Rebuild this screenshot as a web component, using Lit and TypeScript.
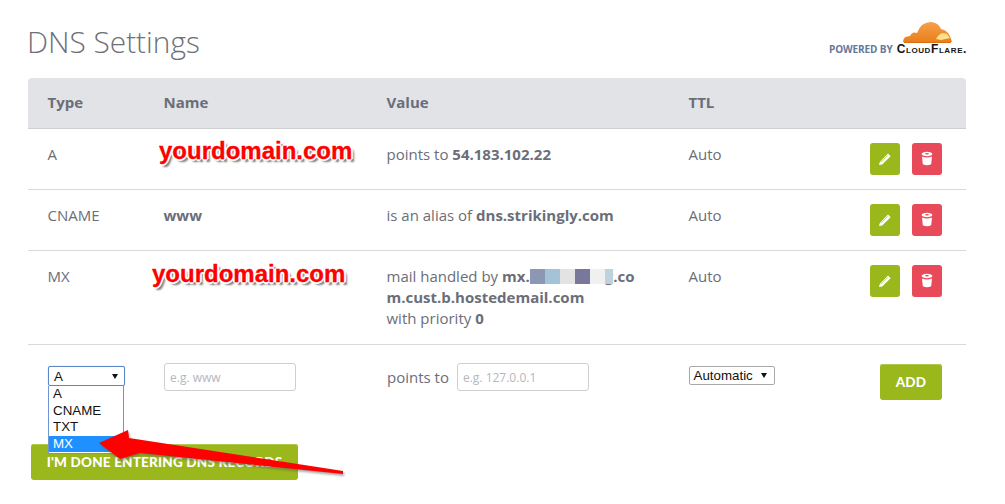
import { LitElement, html, css, svg } from "lit";
import { customElement } from "lit/decorators.js";

const pencil = svg`<svg class="ico" width="14" height="14" viewBox="0 0 14 14"><path d="M1.8 10 L10 1.6 L12.6 4.2 L4.2 12.4 L1 13 Z" fill="#fff"/><path d="M3 10.2 L10 3.2" stroke="#9ab71c" stroke-width=".6"/></svg>`;
const trash = svg`<svg class="ico" width="14" height="16" viewBox="0 0 14 16"><ellipse cx="7" cy="3" rx="5.4" ry="2.2" fill="#fff"/><ellipse cx="7" cy="2.8" rx="2" ry=".7" fill="#e84a5a"/><path d="M2 5.6 Q7 7.6 12 5.6 L11.2 13.2 Q7 15.4 2.8 13.2 Z" fill="#fff"/></svg>`;

@customElement("app-root")
export class AppRoot extends LitElement {
  static styles = css`
    :host { display: block; width: 1005px; height: 504px; position: relative; overflow: hidden; background: #fff; font-family: "Open Sans", sans-serif; color: #6b6e78; font-size: 15px; }
    .page { padding: 0 39px 0 28px; }
    .top { height: 78px; display: flex; justify-content: space-between; }
    h1 { margin: 21px 0 0 -1px; font-size: 29.8px; line-height: 42px; font-weight: 300; color: #6d7078; }
    .brand { display: flex; flex-direction: column; align-items: flex-end; padding-top: 21px; margin-right: -1px; }
    .cloud { display: block; margin-right: 15px; }
    .brandline { display: flex; align-items: baseline; margin-top: 0; line-height: 10px; white-space: nowrap; }
    .pow { font-size: 10px; font-weight: 700; color: #66779a; letter-spacing: -.1px; margin-right: 4px; }
    .cf { font-family: "Liberation Sans", sans-serif; font-size: 12px; font-weight: 700; color: #151515; font-variant: small-caps; letter-spacing: .6px; }
    .row { display: grid; grid-template-columns: 116px 223px 302px 1fr; padding-left: 19.5px; border-bottom: 1px solid #d9d9d9; position: relative; }
    .head { height: 50px; box-sizing: content-box; background: #e1e3e7; border-radius: 4px 4px 0 0; align-items: center; font-weight: 700; border-bottom: 1px solid #cfcfd2; color: #6b6e78; }
    .head div { margin-top: -2px; }
    .r1 { height: 60px; }
    .r3 { height: 93px; }
    .cell { padding-top: 15px; line-height: 21px; }
    b { font-weight: 700; }
    .pix { display: inline-flex; vertical-align: top; margin: 3px -8px 0 0; height: 15px; position: relative; z-index: 1; }
    .pix i { width: 15px; height: 15px; display: block; }
    .pix i:last-child { width: 8px; }
    .acts { position: absolute; right: 24px; top: 14px; display: flex; gap: 12px; }
    .btn { width: 30px; height: 32px; border-radius: 3px; display: flex; align-items: center; justify-content: center; }
    .green { background: #9ab71c; }
    .red { background: #e84a5a; }
    .form { display: grid; grid-template-columns: 116px 223px 302px 1fr; padding: 18px 0 0 20px; height: 99px; box-sizing: border-box; position: relative; }
    .fake { box-sizing: border-box; font-family: "Liberation Sans", sans-serif; font-size: 13.33px; color: #111; background: #fff; display: flex; align-items: center; justify-content: space-between; }
    .sel { width: 77px; height: 20px; margin-top: 3px; border: 1px solid #5b86c8; box-shadow: 0 0 1px #7fa6e0; border-radius: 2px; padding: 0 6px 0 5px; }
    .ttl { width: 86px; height: 19px; margin-top: 3px; border: 1px solid #a9a9a9; border-radius: 2px; padding: 0 7px 0 4px; margin-left: -0.5px; }
    .tri { width: 0; height: 0; border-left: 3.5px solid transparent; border-right: 3.5px solid transparent; border-top: 5px solid #111; }
    .inp { box-sizing: border-box; width: 132px; height: 28px; border: 1px solid #cfcfcf; border-radius: 3px; padding: 0 5px; display: flex; align-items: center; font-size: 12px; color: #b4b7bd; }
    .pts { display: flex; align-items: center; gap: 8px; height: 28px; }
    .add { position: absolute; right: 24px; top: 19px; width: 62px; height: 36px; border-radius: 3px; background: #9ab71c; box-shadow: inset 0 1px #b2c950; color: #fff; font-family: Lato, sans-serif; font-weight: 900; font-size: 13.5px; display: flex; align-items: center; justify-content: center; letter-spacing: .2px; }
    .done { margin: 0 0 0 3px; width: 267px; height: 36px; border-radius: 3px; background: #9ab71c; box-shadow: inset 0 1px #b2c950; color: #fff; font-family: Lato, sans-serif; font-weight: 900; font-size: 13.5px; display: flex; align-items: center; justify-content: center; letter-spacing: .2px; }
    .menu { position: absolute; left: 48px; top: 386px; width: 76px; height: 68px; box-sizing: border-box; border: 1px solid #6f94d2; border-top: none; background: #fff; font-family: "Liberation Sans", sans-serif; font-size: 13.33px; line-height: 16.5px; color: #111; }
    .menu div { padding-left: 4px; height: 16.5px; }
    .menu .on { background: #1e90ff; color: #fff; }
    .mark { position: absolute; font-family: "Liberation Sans", sans-serif; font-weight: 700; font-size: 24px; line-height: 28px; color: #ff0000; -webkit-text-stroke: 0.3px #f00; text-shadow: 1px 1px 0 #fff, -1px -1px 0 #fff, 1px -1px 0 #fff, -1px 1px 0 #fff, 2px 0 0 #fff, -2px 0 0 #fff, 0 2px 0 #fff, 0 -2px 0 #fff, 3px 3px 2px #777; white-space: nowrap; }
    .m1 { left: 159px; top: 137px; }
    .m2 { left: 152px; top: 260px; }
    .arrow { position: absolute; left: 0; top: 0; filter: drop-shadow(1px 2px 1px rgba(90,90,90,.55)); }
  `;

  private actions() {
    return html`<div class="acts"><div class="btn green">${pencil}</div><div class="btn red">${trash}</div></div>`;
  }

  render() {
    const pix = ["#8c98b3", "#a4c3d6", "#e3e3e3", "#78799a", "#eff0ef", "#bdd2dc"];
    return html`
      <div class="page">
        <div class="top">
          <h1>DNS Settings</h1>
          <div class="brand">
            <svg class="cloud" width="49" height="23" viewBox="0 0 49 23">
              <defs><linearGradient id="g" x1="0" y1="0" x2="0" y2="1"><stop offset="0" stop-color="#f6a04a"/><stop offset="1" stop-color="#ea7f1c"/></linearGradient></defs>
              <path d="M0 21 Q0 15 7 15 Q9 10 14 12 Q18 1 28 1 Q36 2 38 8 Q46 9 49 21 Z" fill="url(#g)"/>
              <path d="M33 18 Q37 10 44 13 L47 17 L38 19 Z" fill="#fde28a"/>
              <path d="M1 21.5 L48 21.5" stroke="#d96f12" stroke-width="1.2"/>
            </svg>
            <div class="brandline"><span class="pow">POWERED BY</span><span class="cf">CloudFlare.</span></div>
          </div>
        </div>
        <div class="row head"><div>Type</div><div>Name</div><div>Value</div><div>TTL</div></div>
        <div class="row r1"><div class="cell">A</div><div class="cell"></div><div class="cell">points to <b>54.183.102.22</b></div><div class="cell">Auto</div>${this.actions()}</div>
        <div class="row r1"><div class="cell">CNAME</div><div class="cell"><b>www</b></div><div class="cell">is an alias of <b>dns.strikingly.com</b></div><div class="cell">Auto</div>${this.actions()}</div>
        <div class="row r3"><div class="cell">MX</div><div class="cell"></div><div class="cell">mail handled by <b>mx.</b><span class="pix">${pix.map((c) => html`<i style="background:${c}"></i>`)}</span><b>g.co<br />m.cust.b.hostedemail.com</b><br />with priority <b>0</b></div><div class="cell">Auto</div>${this.actions()}</div>
        <div class="form">
          <div><div class="fake sel"><span>A</span><span class="tri"></span></div></div>
          <div><div class="inp">e.g. www</div></div>
          <div class="pts"><span>points to</span><div class="inp">e.g. 127.0.0.1</div></div>
          <div><div class="fake ttl"><span>Automatic</span><span class="tri"></span></div></div>
          <div class="add">ADD</div>
        </div>
        <div class="done">I'M DONE ENTERING DNS RECORDS</div>
      </div>
      <div class="mark m1">yourdomain.com</div>
      <div class="mark m2">yourdomain.com</div>
      <div class="menu"><div>A</div><div>CNAME</div><div>TXT</div><div class="on">MX</div></div>
      <svg class="arrow" width="1005" height="504" viewBox="0 0 1005 504">
        <path d="M99 443 L128 430 L129 438 L343 471 L343 474 L140 453 L120 459 Z" fill="#ff0000"/>
      </svg>
    `;
  }
}
